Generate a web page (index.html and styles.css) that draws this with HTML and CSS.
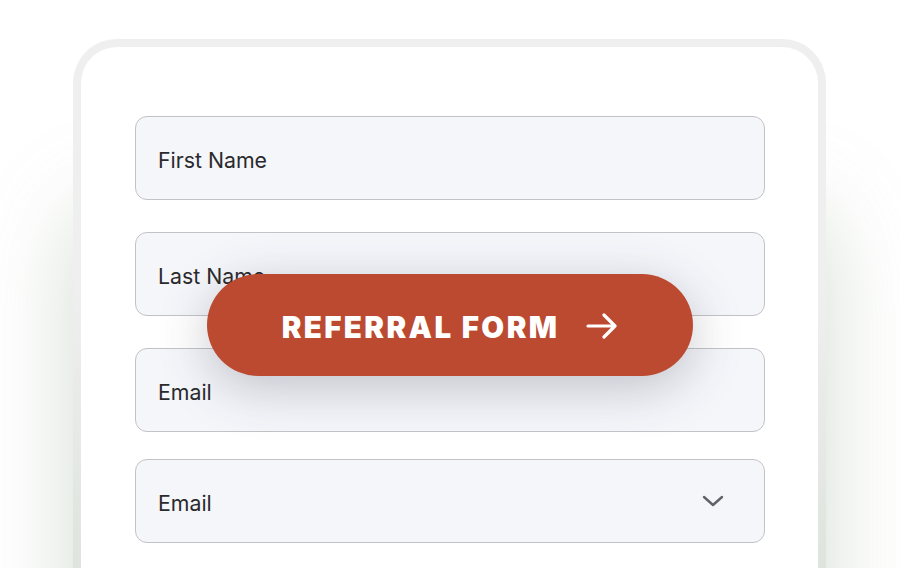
FILE: index.html
```html
<!DOCTYPE html>
<html>
<head>
<meta charset="utf-8">
<link rel="stylesheet" href="styles.css">
</head>
<body>
<div class="stage">
  <div class="card">
    <div class="field"><span class="label">First Name</span></div>
    <div class="field"><span class="label">Last Name</span></div>
    <div class="field"><span class="label">Email</span></div>
    <div class="field field-select">
      <span class="label">Email</span>
      <svg class="chevron" width="22" height="12" viewBox="0 0 22 12"><path d="M2 2 L11 10 L20 2" fill="none" stroke="#5f6268" stroke-width="2.4" stroke-linecap="round" stroke-linejoin="round"/></svg>
    </div>
  </div>
  <a class="cta" href="#">
    <span class="cta-text">REFERRAL FORM</span>
    <svg class="cta-arrow" width="32" height="26" viewBox="0 0 32 26"><path d="M2 13 H29 M18 2 L29 13 L18 24" fill="none" stroke="#fff" stroke-width="3.2" stroke-linecap="round" stroke-linejoin="round"/></svg>
  </a>
</div>
</body>
</html>
```

FILE: styles.css
```css
html, body {
  margin: 0;
  padding: 0;
  background: #ffffff;
  overflow: hidden;
}
.stage {
  position: relative;
  width: 900px;
  height: 568px;
  overflow: hidden;
  font-family: "Inter", "Liberation Sans", sans-serif;
}
.card {
  width: 753px;
  margin: 39px 0 0 73px;
  height: 700px;
  box-sizing: border-box;
  border: 8px solid transparent;
  border-radius: 44px;
  background:
    linear-gradient(#ffffff, #ffffff) padding-box,
    linear-gradient(180deg, #efefef 0%, #efefef 35%, #dfe4de 75%, #d9dfd8 100%) border-box;
  box-shadow: 0 170px 90px rgba(145, 165, 140, 0.38);
  padding: 69px 46px 0 54px;
  display: flex;
  flex-direction: column;
  gap: 32px;
}
.field {
  height: 84px;
  box-sizing: border-box;
  border: 1px solid #c3c3c7;
  border-radius: 12px;
  background: #f5f6fa;
  display: flex;
  align-items: center;
  padding: 4px 22px 0;
  width: 630px;
}
.field-select {
  margin-top: -5px;
  justify-content: space-between;
  padding-right: 40px;
}
.label {
  font-size: 21.3px;
  color: #2a2a2c;
}
.chevron {
  display: block;
  margin-top: -4px;
}
.cta {
  position: absolute;
  left: 207px;
  top: 274px;
  width: 486px;
  height: 102px;
  border-radius: 51px;
  background: #bc4a31;
  box-shadow: 0 12px 50px rgba(60, 60, 80, 0.28);
  display: flex;
  align-items: center;
  justify-content: center;
  gap: 27px;
  text-decoration: none;
  padding-top: 3px;
  box-sizing: border-box;
}
.cta-text {
  color: #ffffff;
  font-family: "Inter", "Liberation Sans", sans-serif;
  font-weight: 900;
  font-size: 29.5px;
  letter-spacing: 2.4px;
}
.cta-arrow {
  display: block;
  margin-top: -2px;
}
```
